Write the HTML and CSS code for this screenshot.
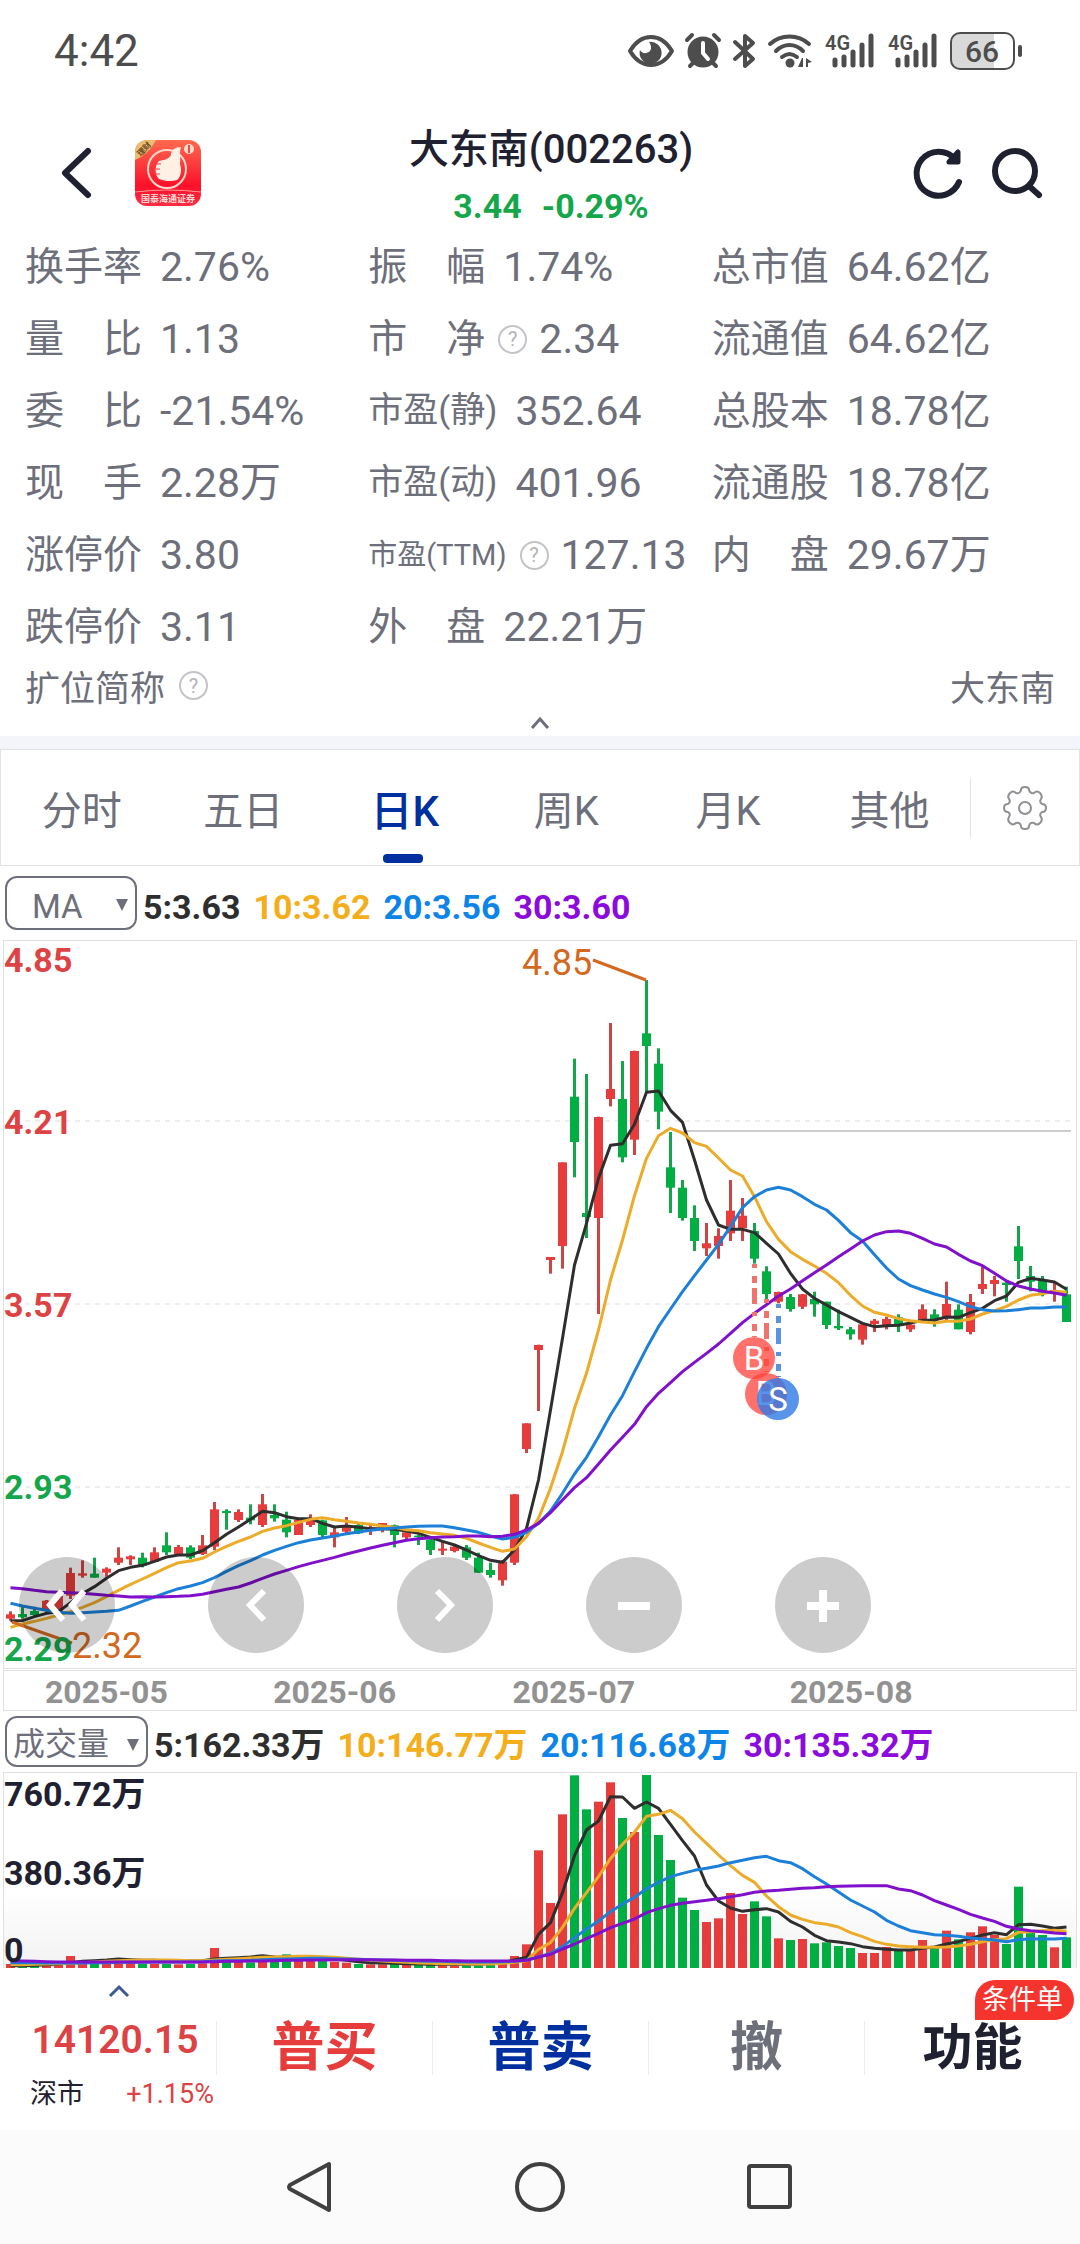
FILE: index.html
```html
<!DOCTYPE html>
<html lang="zh-CN">
<head>
    <meta charset="UTF-8">
    <meta name="viewport" content="width=device-width, initial-scale=1.0">
    <title>大东南(002263)</title>
    <link rel="stylesheet" href="styles.css">
</head>
<body>
    <div class="status-bar">
        <span class="clock">4:42</span>
        <div class="status-icons">
            <svg width="46" height="36" viewBox="0 0 46 36"><path d="M2 18C8 8 15 4 23 4s15 4 21 14c-6 10-13 14-21 14S8 28 2 18z" fill="none" stroke="#4d4d4d" stroke-width="4" stroke-linejoin="round"/><path d="M21 9a11 11 0 1 1-9 8c2 4 7 4 10 1 2-3 1-6-1-9z" fill="#4d4d4d"/></svg>
            <svg width="36" height="36" viewBox="0 0 36 36"><circle cx="18" cy="19" r="15.500" fill="#4d4d4d"/><path d="M18 10v10l5 6" fill="none" stroke="#fff" stroke-width="4" stroke-linecap="round"/><path d="M2 7l5-5M34 7l-5-5M5 33l4-4M31 33l-4-4" stroke="#4d4d4d" stroke-width="4" stroke-linecap="round"/></svg>
            <svg width="24" height="36" viewBox="0 0 24 36"><path d="M3 9l18 17-8 7V3l8 7L3 26" fill="none" stroke="#4d4d4d" stroke-width="4" stroke-linecap="round" stroke-linejoin="round"/></svg>
            <svg width="46" height="36" viewBox="0 0 46 36"><g fill="none" stroke="#4d4d4d" stroke-width="4" stroke-linecap="round"><path d="M3 11c11-10 28-10 39 0M9 18c8-8 19-8 27 0M15 24c5-4 10-4 15 0"/></g><circle cx="23" cy="30" r="4.500" fill="#4d4d4d"/><path d="M36 25v9h-5l4-9M39 34v-9l6 4-4 1v4" fill="#4d4d4d"/></svg>
            <svg width="52" height="36" viewBox="0 0 52 36"><text class="net" x="1" y="17">4G</text><path d="M11 27v5M20 24v8M29 19v13M38 12v20M47 3v29" stroke="#4d4d4d" stroke-width="5" stroke-linecap="round"/></svg>
            <svg width="52" height="36" viewBox="0 0 52 36"><text class="net" x="1" y="17">4G</text><path d="M11 27v5M20 24v8M29 19v13M38 12v20M47 3v29" stroke="#4d4d4d" stroke-width="5" stroke-linecap="round"/></svg>
            <svg width="73" height="38" viewBox="0 0 73 38"><path d="M10 1h34v36H10a8 8 0 0 1-8-8V9a8 8 0 0 1 8-8z" fill="#d9d9d9"/><rect x="1" y="1" width="63" height="36" rx="9" fill="none" stroke="#4d4d4d" stroke-width="2"/><path d="M70 15v8" stroke="#4d4d4d" stroke-width="4" stroke-linecap="round"/><text class="battery-text" x="32" y="30" text-anchor="middle">66</text></svg>
        </div>
    </div>

    <header class="header">
        <div class="header-side">
            <button class="icon-btn" aria-label="返回"><svg width="32" height="54" viewBox="0 0 32 54"><path d="M28 5L5 27l23 22" fill="none" stroke="#1f2130" stroke-width="6" stroke-linecap="round" stroke-linejoin="round"/></svg></button>
            <svg class="logo" width="66" height="66" viewBox="0 0 66 66">
                <defs>
                    <linearGradient id="logo-bg" x1="0" y1="0" x2="0" y2="1"><stop offset="0" stop-color="#ff6a50"/><stop offset=".7" stop-color="#fb1029"/><stop offset="1" stop-color="#ff2f45"/></linearGradient>
                    <clipPath id="logo-clip"><rect width="66" height="66" rx="12"/></clipPath>
                </defs>
                <g clip-path="url(#logo-clip)">
                    <rect width="66" height="66" fill="url(#logo-bg)"/>
                    <path d="M0 0h21Q14 14 0 20z" fill="#e9bd72"/>
                    <path d="M0 52q33-4 66 0" fill="none" stroke="#ff9a94" stroke-width="1"/>
                </g>
                <text class="logo-corner" x="9" y="12" text-anchor="middle" transform="rotate(-45 9 9)">理财</text>
                <circle cx="32" cy="29" r="19" fill="none" stroke="#ffd9cb" stroke-width="2"/>
                <path d="M36 15c0-5 4-8 10-8-2 5 0 11-1 17 2 6 1 13-3 16-6 2-13 1-18-1-5-5-4-14 0-18 4-1 9-1 12-6z" fill="#fff0e6"/>
                <path d="M22 24h4M21 29h4M21 34h4" stroke="#fb3940" stroke-width="1"/>
                <circle cx="54" cy="9" r="5" fill="#ffd9cb"/><path d="M54 5v8" stroke="#f14b3d" stroke-width="2"/>
                <text class="logo-text" x="33" y="62" text-anchor="middle">国泰海通证券</text>
            </svg>
        </div>
        <div class="header-title">
            <h1>大东南(002263)</h1>
            <p class="quote"><span>3.44</span><span>-0.29%</span></p>
        </div>
        <div class="header-side header-actions">
            <button class="icon-btn" aria-label="刷新"><svg width="50" height="52" viewBox="0 0 50 52"><path d="M46 35A22 22 0 1 1 42 12" fill="none" stroke="#1f2130" stroke-width="6" stroke-linecap="round"/><path d="M45 5v10H36z" fill="#1f2130" stroke="#1f2130" stroke-width="5" stroke-linejoin="round"/></svg></button>
            <button class="icon-btn" aria-label="搜索"><svg width="50" height="52" viewBox="0 0 50 52"><circle cx="23" cy="24" r="20" fill="none" stroke="#1f2130" stroke-width="6"/><path d="M37 39l10 9" stroke="#1f2130" stroke-width="6" stroke-linecap="round"/></svg></button>
        </div>
    </header>

    <section class="stats">
        <dl class="stats-grid">
            <div class="stat"><dt>换手率</dt><dd>2.76%</dd></div>
            <div class="stat"><dt>振　幅</dt><dd>1.74%</dd></div>
            <div class="stat"><dt>总市值</dt><dd>64.62亿</dd></div>
            <div class="stat"><dt>量　比</dt><dd>1.13</dd></div>
            <div class="stat has-help"><dt>市　净</dt><dd><button class="help" aria-label="市净说明">?</button>2.34</dd></div>
            <div class="stat"><dt>流通值</dt><dd>64.62亿</dd></div>
            <div class="stat"><dt>委　比</dt><dd>-21.54%</dd></div>
            <div class="stat"><dt class="medium">市盈(静)</dt><dd>352.64</dd></div>
            <div class="stat"><dt>总股本</dt><dd>18.78亿</dd></div>
            <div class="stat"><dt>现　手</dt><dd>2.28万</dd></div>
            <div class="stat"><dt class="medium">市盈(动)</dt><dd>401.96</dd></div>
            <div class="stat"><dt>流通股</dt><dd>18.78亿</dd></div>
            <div class="stat"><dt>涨停价</dt><dd>3.80</dd></div>
            <div class="stat has-help"><dt class="small">市盈(TTM)</dt><dd><button class="help" aria-label="市盈说明">?</button>127.13</dd></div>
            <div class="stat"><dt>内　盘</dt><dd>29.67万</dd></div>
            <div class="stat"><dt>跌停价</dt><dd>3.11</dd></div>
            <div class="stat"><dt>外　盘</dt><dd>22.21万</dd></div>
        </dl>
        <div class="full-name">
            <span class="full-name-label">扩位简称<button class="help" aria-label="扩位简称说明">?</button></span>
            <span>大东南</span>
        </div>
        <button class="collapse" aria-label="收起"><svg width="22" height="14" viewBox="0 0 22 14"><path d="M3 12l8-9 8 9" fill="none" stroke="#6d6f7b" stroke-width="3"/></svg></button>
    </section>

    <nav class="tabs">
        <button class="tab">分时</button>
        <button class="tab">五日</button>
        <button class="tab active">日K</button>
        <button class="tab">周K</button>
        <button class="tab">月K</button>
        <button class="tab">其他</button>
        <button class="settings" aria-label="设置"><svg width="44" height="46" viewBox="0 0 44 46"><path d="M18 5q0-3 4-3t4 3q1 4 5 3 3-3 6 0t1 6q-2 3 1 5 4 0 4 4t-4 4q-3 2-1 5 2 3-1 6t-6 0q-4-1-5 3 0 3-4 3t-4-3q-1-4-5-3-3 3-6 0t-1-6q2-3-1-5-4 0-4-4t4-4q3-2 1-5-2-3 1-6t6 0q4 1 5-3z" fill="none" stroke="#8f8f94" stroke-width="2"/><circle cx="22" cy="23" r="6" fill="none" stroke="#8f8f94" stroke-width="2"/></svg></button>
    </nav>

    <div class="legend">
        <span class="picker">
            <select aria-label="主图指标"><option>MA</option></select>
        </span>
        <span class="ma5">5:3.63</span>
        <span class="ma10">10:3.62</span>
        <span class="ma20">20:3.56</span>
        <span class="ma30">30:3.60</span>
    </div>

    <div class="chart price-chart">
        <svg id="price" viewBox="4 941 1072 727">
            <g class="grid-lines">
                <path d="M25 1121H1072M25 1304H1072M25 1487H1072"/>
            </g>
            <path d="M686 1131H1071" stroke="#ccc" stroke-width="2"/>
            <g id="candles"></g>
            <g id="price-lines"></g>
            <g class="note">
                <path d="M593 960L646 980M12 1622L72 1643"/>
                <text x="522" y="975">4.85</text>
                <text x="72" y="1658">2.32</text>
            </g>
            <g class="axis">
                <text class="up" x="4" y="972">4.85</text>
                <text class="up" x="4" y="1134">4.21</text>
                <text class="up" x="4" y="1317">3.57</text>
                <text class="down" x="4" y="1499">2.93</text>
                <text class="down" x="4" y="1661">2.29</text>
            </g>
            <!-- buy / sell marks -->
            <g stroke-width="5" stroke-dasharray="4 8 7 5 16 8">
                <path d="M754.500 1264V1337M766.500 1299V1372" stroke="#f0736e"/>
                <path d="M778.500 1304V1377" stroke="#5a92e0"/>
            </g>
            <g class="marks">
                <circle cx="766" cy="1394" r="21" fill="#ff4238" opacity=".75"/><text x="766" y="1405">B</text>
                <circle cx="754" cy="1358" r="21" fill="#ff4238" opacity=".75"/><text x="754" y="1370">B</text>
                <circle cx="778" cy="1399" r="21" fill="#3079e6" opacity=".8"/><text x="778" y="1411">S</text>
            </g>
        </svg>
        <div class="chart-controls">
            <button aria-label="最早"><svg width="96" height="96" viewBox="0 0 96 96"><path d="M43 34L31 48l13 15M65 34L53 48l12 15"/></svg></button>
            <button aria-label="向左"><svg width="96" height="96" viewBox="0 0 96 96"><path d="M56 34L42 48l14 15"/></svg></button>
            <button aria-label="向右"><svg width="96" height="96" viewBox="0 0 96 96"><path d="M40 34l14 14-14 15"/></svg></button>
            <button aria-label="缩小"><svg width="96" height="96" viewBox="0 0 96 96"><path class="bold" d="M32 49h32"/></svg></button>
            <button aria-label="放大"><svg width="96" height="96" viewBox="0 0 96 96"><path class="bold" d="M32 49h32M48 33v32"/></svg></button>
        </div>
    </div>
    <div class="dates">
        <span>2025-05</span><span>2025-06</span><span>2025-07</span><span>2025-08</span>
    </div>

    <div class="legend legend-volume">
        <span class="picker picker-wide">
            <select aria-label="副图指标"><option>成交量</option></select>
        </span>
        <span class="ma5">5:162.33万</span>
        <span class="ma10">10:146.77万</span>
        <span class="ma20">20:116.68万</span>
        <span class="ma30">30:135.32万</span>
    </div>

    <div class="chart volume-chart">
        <svg id="volume" viewBox="4 1773 1072 195">
            <g id="bars"></g>
            <g id="volume-lines"></g>
            <g class="axis">
                <text x="4" y="1806">760.72万</text>
                <text x="4" y="1885">380.36万</text>
                <text x="4" y="1962">0</text>
            </g>
        </svg>
    </div>

    <footer class="trade-bar">
        <a class="index" href="#">
            <svg width="22" height="14" viewBox="0 0 22 14"><path d="M2 12l9-9 9 9" fill="none" stroke="#3c5a94" stroke-width="3"/></svg>
            <strong>14120.15</strong>
            <span class="index-row"><span>深市</span><span class="index-change">+1.15%</span></span>
        </a>
        <button class="trade buy">普买</button>
        <button class="trade sell">普卖</button>
        <button class="trade cancel">撤</button>
        <button class="trade more">功能<span class="badge">条件单</span></button>
    </footer>

    <div class="system-nav">
        <button aria-label="后退"><svg width="48" height="52" viewBox="0 0 48 52"><path d="M43 3v46L4 28q-2-2 0-4z" fill="none" stroke="#404040" stroke-width="4" stroke-linejoin="round"/></svg></button>
        <button aria-label="主页"><svg width="52" height="52" viewBox="0 0 52 52"><circle cx="26" cy="26" r="23" fill="none" stroke="#404040" stroke-width="4"/></svg></button>
        <button aria-label="最近任务"><svg width="48" height="52" viewBox="0 0 48 52"><rect x="3" y="5" width="41" height="41" rx="2" fill="none" stroke="#404040" stroke-width="4"/></svg></button>
    </div>

    <script src="chart.js"></script>
</body>
</html>
```
FILE: styles.css
```css
* {
    box-sizing: border-box;
}

body {
    margin: 0;
    background: #fff;
    color: #6d6f7b;
    font-family: Roboto, "Noto Sans CJK SC", sans-serif;
}

button {
    padding: 0;
    border: none;
    background: none;
    font-family: inherit;
    color: inherit;
}

svg {
    display: block;
    overflow: visible;
}

/* status bar */
.status-bar {
    display: flex;
    justify-content: space-between;
    align-items: center;
    height: 102px;
    padding: 0 57px 0 54px;
}

.clock {
    font-size: 44px;
    color: #4d4d4d;
}

.status-icons {
    display: flex;
    align-items: center;
    gap: 11px;
}

.net {
    font-size: 20px;
    font-weight: 600;
    fill: #4d4d4d;
}

.battery-text {
    font-size: 30px;
    font-weight: 500;
    fill: #4d4d4d;
}

/* header */
.header {
    display: grid;
    grid-template-columns: 1fr auto 1fr;
    height: 126px;
    padding: 20px 38px 0 60px;
}

.header-side {
    display: flex;
    align-items: center;
    height: 102px;
    gap: 43px;
}

.header-actions {
    justify-content: flex-end;
    gap: 29px;
}

.header-title {
    text-align: center;
}

.header-title h1 {
    margin: 0;
    font-size: 40px;
    font-weight: 500;
    line-height: 56px;
    color: #1f2130;
}

.quote {
    display: flex;
    justify-content: center;
    gap: 20px;
    margin: 0;
    font-size: 34px;
    font-weight: 700;
    line-height: 56px;
    color: #14a64a;
}

.logo-text {
    font-size: 9px;
    font-weight: 700;
    fill: #ffdad6;
}

.logo-corner {
    font-size: 8px;
    font-weight: 700;
    fill: #6e4a1c;
}

/* stats */
.stats {
    padding: 3px 25px 0;
    border-bottom: 13px solid #f4f5fa;
}

.stats-grid {
    display: grid;
    grid-template-columns: repeat(3, 1fr);
    grid-auto-rows: 72px;
    margin: 0;
}

.stat {
    display: flex;
    align-items: center;
    gap: 18px;
    line-height: 68px;
    white-space: nowrap;
}

.has-help {
    gap: 13px;
}

.stat dt {
    font-size: 39px;
}

.stat dt.medium {
    font-size: 35px;
}

.stat dt.small {
    font-size: 29px;
}

.stat dd {
    display: flex;
    align-items: center;
    gap: 12px;
    margin: 0;
    font-size: 41px;
}

.help {
    width: 29px;
    height: 29px;
    border: 2px solid #c4c4c8;
    border-radius: 50%;
    font-size: 20px;
    line-height: 24px;
    color: #b4b4b8;
}

.full-name {
    display: flex;
    justify-content: space-between;
    align-items: center;
    height: 45px;
    font-size: 35px;
}

.full-name-label {
    display: flex;
    align-items: center;
    gap: 14px;
}

.collapse {
    display: flex;
    justify-content: center;
    width: 100%;
    height: 28px;
    padding-top: 8px;
}

/* period tabs */
.tabs {
    display: flex;
    height: 117px;
    border: 1px solid #e2e2e6;
}

.tab {
    position: relative;
    flex: 162;
    font-size: 40px;
}

.tab.active {
    font-size: 42px;
    font-weight: 500;
    color: #0030a0;
}

.tab.active::after {
    content: "";
    position: absolute;
    left: 50%;
    bottom: 2px;
    width: 40px;
    height: 9px;
    margin-left: -22px;
    border-radius: 4px;
    background: #0030a0;
}

.settings {
    display: flex;
    flex: 108;
    justify-content: center;
    align-items: center;
    align-self: center;
    height: 60px;
    border-left: 1px solid #e2e2e6;
}

/* legends */
.legend {
    display: flex;
    align-items: center;
    gap: 13px;
    height: 74px;
    padding-left: 5px;
    font-size: 34px;
    font-weight: 700;
    line-height: 40px;
    white-space: nowrap;
}

.legend > span:not(.picker) {
    padding-top: 7px;
}

.legend-volume {
    height: 61px;
}

.picker {
    position: relative;
    width: 132px;
    height: 54px;
    margin-right: -7px;
}

.picker-wide {
    width: 143px;
    height: 51px;
}

.picker select {
    appearance: none;
    width: 100%;
    height: 100%;
    padding: 6px 0 0 25px;
    border: 2px solid #6d6f7b;
    border-radius: 12px;
    background: none;
    font-family: inherit;
    font-size: 33px;
    color: #6d6f7b;
}

.picker-wide select {
    padding: 4px 0 0 6px;
    font-size: 32px;
}

.picker::after {
    content: "";
    position: absolute;
    right: 9px;
    top: 23px;
    border: 6px solid transparent;
    border-top: 12px solid #6d6f7b;
    border-bottom: none;
}

.ma5 { color: #2e2e2e; }
.ma10 { color: #f5ae1b; }
.ma20 { color: #0d85e8; }
.ma30 { color: #8c0bdc; }

/* charts */
.chart {
    position: relative;
    margin: 0 3px;
    border: 1px solid #e0e0e0;
}

.chart > svg {
    width: 100%;
    height: auto;
}

.price-chart {
    margin-bottom: 1px;
}

.volume-chart {
    border-bottom: none;
    background: linear-gradient(#fff 60%, #f2f2f2);
}

.grid-lines path {
    stroke: #eee;
    stroke-width: 2;
    stroke-dasharray: 5 5;
}

.axis text {
    font-size: 34px;
    font-weight: 700;
    fill: #1f2130;
}

.axis .up { fill: #dd4244; }
.axis .down { fill: #14a64a; }

.note text {
    font-size: 36px;
    fill: #d2691e;
}

.note path {
    stroke: #d2691e;
    stroke-width: 3;
}

.marks text {
    font-size: 33px;
    fill: #fff;
    text-anchor: middle;
}

.line {
    fill: none;
    stroke-width: 3;
    stroke-linejoin: round;
}

.line.ma5 { stroke: #2e2e2e; }
.line.ma10 { stroke: #ecab28; }
.line.ma20 { stroke: #1c80d8; }
.line.ma30 { stroke: #8010cc; }

.rise { fill: #e63c3c; }
.fall { fill: #00ae42; }
.wick.rise { fill: #cc4646; }
.wick.fall { fill: #16a34a; }

.chart-controls {
    position: absolute;
    left: 15px;
    bottom: 15px;
    display: flex;
    gap: 93px;
}

.chart-controls button {
    border-radius: 50%;
    background: rgba(0, 0, 0, 0.2);
}

.chart-controls path {
    fill: none;
    stroke: #fff;
    stroke-width: 6;
}

.chart-controls .bold {
    stroke-width: 8;
}

.dates {
    display: grid;
    grid-template-columns: 228fr 239fr 277fr 286fr;
    height: 41px;
    margin: 0 3px;
    padding-left: 41px;
    border: 1px solid #e0e0e0;
    font-size: 32px;
    font-weight: 700;
    line-height: 42px;
    color: #929292;
}

/* trade bar */
.trade-bar {
    display: grid;
    grid-template-columns: repeat(5, 1fr);
    height: 162px;
}

.index {
    display: flex;
    flex-direction: column;
    align-items: center;
    padding-top: 16px;
    text-decoration: none;
    color: #1f2130;
}

.index svg {
    margin-left: 22px;
}

.index strong {
    margin: 14px 0 8px 14px;
    font-size: 39px;
    font-weight: 600;
    line-height: 56px;
    color: #dd4244;
}

.index-row {
    display: flex;
    justify-content: space-between;
    width: 100%;
    padding: 2px 2px 0 30px;
    font-size: 27px;
    line-height: 32px;
}

.index-change {
    color: #dd4244;
}

.trade {
    position: relative;
    align-self: start;
    height: 54px;
    margin-top: 53px;
    border-left: 1px solid #ececf0;
    font-size: 53px;
    font-weight: 700;
    line-height: 40px;
}

.buy { color: #e63c3c; }
.sell { color: #0030a0; }

.more {
    font-size: 50px;
    color: #1f2130;
}

.badge {
    position: absolute;
    right: 6px;
    top: -41px;
    padding: 0 11px 0 7px;
    border-radius: 20px 20px 20px 0;
    background: #f5342e;
    font-size: 27px;
    font-weight: 400;
    line-height: 40px;
    color: #fff;
}

/* system navigation */
.system-nav {
    display: flex;
    justify-content: center;
    align-items: center;
    gap: 180px;
    height: 114px;
    background: #fbfbfb;
}
```
FILE: chart.js
```js
const STEP = 12;
const FIRST_X = 10.5;
const BODY = 9;
const NS = 'http://www.w3.org/2000/svg';

// values are kept in thirds of a chart unit, counted from the base of each block
const block = (base, values) => values.map(v => base + v / 3);
const candleBlock = (base, rows) => rows.map(([dir, ...v]) => [dir, ...block(base, v)]);

// direction, high, low, body top, body bottom
const candles = [
    ...candleBlock(1450, [
        ['r', 484, 512, 493, 506], ['f', 466, 506, 492, 502], ['f', 470, 500, 483, 495],
        ['r', 450, 490, 452, 480], ['r', 438, 485, 438, 482], ['r', 353, 447, 369, 437],
        ['r', 331, 383, 370, 377], ['f', 323, 383, 371, 383], ['r', 352, 380, 356, 368],
        ['r', 292, 345, 323, 338], ['r', 316, 345, 319, 328], ['f', 308, 352, 323, 346],
        ['r', 292, 336, 307, 336], ['f', 247, 315, 286, 307], ['r', 285, 315, 291, 312],
        ['f', 286, 328, 292, 323], ['r', 255, 315, 286, 312], ['r', 156, 300, 178, 290],
        ['f', 178, 239, 183, 189], ['r', 178, 216, 186, 210], ['f', 163, 223, 203, 211],
        ['r', 132, 231, 163, 225], ['f', 163, 215, 195, 205], ['f', 185, 262, 209, 247],
        ['r', 205, 255, 209, 255], ['r', 193, 231, 209, 225], ['f', 209, 262, 211, 255],
        ['r', 232, 292, 247, 262], ['r', 201, 250, 225, 245], ['f', 222, 252, 225, 250],
        ['r', 225, 255, 232, 240], ['r', 219, 247, 219, 226], ['f', 224, 292, 226, 255],
        ['r', 240, 270, 247, 262], ['f', 255, 285, 257, 261], ['f', 262, 315, 269, 300],
        ['r', 275, 315, 296, 302], ['r', 285, 307, 290, 303], ['f', 285, 330, 292, 323],
        ['f', 308, 368, 323, 368], ['f', 338, 383, 360, 375], ['r', 330, 407, 335, 391],
        ['r', 132, 345, 133, 338]
    ]),
    ...candleBlock(930, [
        ['r', 1480, 1569, 1480, 1557], ['r', 1244, 1443, 1245, 1260], ['r', 981, 1031, 981, 990],
        ['r', 697, 1016, 697, 948], ['f', 386, 742, 500, 636], ['f', 432, 924, 849, 861],
        ['r', 560, 1152, 561, 864], ['r', 279, 529, 477, 507], ['f', 393, 697, 507, 682],
        ['r', 362, 675, 363, 629], ['f', 150, 487, 310, 348], ['f', 355, 598, 401, 545],
        ['f', 606, 849, 712, 773], ['f', 750, 872, 773, 864], ['f', 826, 963, 864, 933],
        ['r', 879, 978, 940, 955], ['r', 895, 986, 918, 948], ['r', 750, 933, 842, 910],
        ['r', 804, 933, 857, 895], ['f', 879, 1001, 903, 986], ['f', 1009, 1107, 1024, 1092],
        ['r', 1085, 1120, 1086, 1115], ['f', 1092, 1145, 1101, 1137], ['r', 1092, 1137, 1093, 1130],
        ['f', 1085, 1160, 1107, 1123], ['f', 1115, 1197, 1115, 1185]
    ]),
    ...candleBlock(1130, [
        ['f', 539, 600, 588, 595], ['f', 591, 629, 598, 613], ['r', 583, 644, 583, 629],
        ['r', 567, 606, 572, 582], ['r', 560, 598, 567, 585], ['f', 553, 606, 562, 585],
        ['r', 583, 606, 584, 598], ['r', 523, 572, 538, 570], ['f', 538, 590, 553, 570],
        ['r', 455, 570, 522, 562], ['f', 523, 598, 539, 598], ['r', 492, 613, 516, 606],
        ['r', 405, 492, 462, 477], ['r', 438, 499, 450, 462], ['f', 455, 515, 458, 465],
        ['f', 288, 447, 349, 393], ['f', 408, 484, 438, 455], ['f', 438, 499, 450, 488],
        ['r', 455, 515, 480, 487], ['f', 470, 576, 493, 576]
    ])
];

const priceLines = {
    ma5: [
        ...block(1450, [512, 512, 500, 490, 485, 458, 431, 410, 385, 362, 352, 346, 334, 321, 315, 315, 302, 278, 253, 231, 208, 184, 188, 200, 206, 206, 220, 231, 228, 232, 236, 236, 238, 243, 250, 262, 274, 285, 300, 317, 331, 337, 300, 235, 90]),
        ...block(930, [1440, 1225, 1005, 880, 745, 646, 641, 583, 487, 483, 541, 577, 690, 810, 885, 898, 898, 908, 940, 972, 1030, 1077, 1105]),
        ...block(1130, [525, 545, 562, 580, 590, 587, 586, 579, 571, 570, 561, 562, 548, 535, 512, 498, 457, 445, 450, 456, 478])
    ],
    ma10: [
        ...block(1450, [532, 522, 514, 505, 495, 485, 472, 458, 440, 421, 403, 387, 370, 353, 338, 333, 325, 306, 289, 274, 261, 244, 234, 227, 217, 208, 203, 209, 214, 219, 223, 228, 232, 239, 242, 248, 252, 256, 265, 279, 292, 304, 297, 260, 205, 115, 5]),
        ...block(930, [1435, 1330, 1200, 1050, 930, 797, 685, 617, 595, 609, 638, 649, 684, 720, 738, 800, 875, 928, 965, 988, 1008]),
        ...block(1130, [430, 458, 496, 528, 547, 555, 566, 572, 576, 579, 574, 574, 567, 552, 542, 529, 510, 496, 491, 484, 487])
    ],
    ma20: [
        ...block(1450, [460, 468, 475, 481, 487, 490, 488, 486, 484, 481, 468, 454, 441, 428, 416, 408, 398, 383, 364, 347, 332, 315, 301, 289, 278, 270, 264, 258, 251, 246, 241, 237, 234, 231, 229, 228, 228, 233, 240, 247, 258, 267, 262, 247, 220, 183, 130, 72, 22, -40]),
        ...block(930, [1455, 1397, 1325, 1255, 1190, 1137, 1085, 1037, 990, 943, 890, 833, 800, 780, 772, 780, 800, 823]),
        ...block(1130, [240, 271, 308, 333, 374, 414, 447, 467, 480, 492, 502, 515, 530, 539, 543, 542, 539, 534, 534, 531, 531])
    ],
    ma30: [
        ...block(1450, [413, 416, 421, 425, 427, 428, 430, 433, 436, 438, 441, 440, 441, 440, 439, 437, 433, 425, 418, 411, 399, 385, 372, 361, 350, 340, 331, 322, 312, 303, 294, 286, 278, 271, 266, 263, 261, 260, 258, 258, 260, 259, 253, 240, 220, 188, 150, 113, 83, 42, 0, -38]),
        ...block(930, [1483, 1430, 1390, 1358, 1325, 1297, 1270, 1242, 1210, 1178, 1150, 1124, 1098, 1077, 1052, 1028]),
        ...block(1130, [405, 380, 357, 333, 315, 305, 303, 310, 325, 342, 351, 373, 393, 407, 430, 453, 468, 477, 484, 489, 496])
    ]
};

const volumes = block(1710, [
    762, 765, 766, 764, 765, 738, 762, 761, 760, 744, 755, 762, 762, 762, 763, 762, 760, 714, 750, 752,
    757, 745, 752, 733, 735, 745, 752, 755, 758, 762, 763, 763, 762, 764, 765, 765, 764, 766, 766, 766,
    765, 762, 738, 703, 421, 579, 313, 196, 298, 275, 217, 324, 366, 195, 375, 450, 563, 600, 636, 625,
    549, 612, 574, 619, 685, 690, 687, 700, 697, 708, 714, 729, 729, 711, 722, 722, 690, 712, 662, 688,
    667, 649, 675, 702, 530, 668, 675, 712, 682
]);

const volumeLines = {
    ma5: block(1710, [767, 767, 766, 764, 762, 758, 754, 752, 750, 747, 749, 751, 751, 752, 753, 753, 752, 747, 745, 743, 741, 737, 741, 742, 741, 743, 745, 748, 751, 755, 758, 759, 760, 761, 762, 763, 763, 763, 763, 762, 761, 758, 750, 742, 673, 638, 548, 437, 360, 333, 260, 261, 295, 276, 295, 343, 392, 438, 525, 573, 594, 604, 599, 596, 606, 634, 651, 676, 692, 696, 701, 710, 715, 718, 720, 720, 715, 711, 702, 695, 685, 675, 668, 674, 644, 643, 648, 655, 651]),
    ma10: block(1710, [764, 764, 763, 762, 761, 760, 758, 756, 754, 752, 751, 750, 750, 750, 751, 752, 752, 750, 748, 746, 744, 742, 741, 740, 739, 739, 740, 742, 745, 748, 751, 753, 755, 757, 759, 760, 761, 761, 762, 762, 762, 760, 757, 752, 718, 698, 652, 595, 548, 500, 446, 403, 366, 319, 313, 301, 326, 366, 400, 435, 467, 496, 517, 558, 590, 615, 628, 638, 643, 651, 668, 680, 694, 703, 708, 710, 712, 712, 711, 708, 703, 695, 689, 686, 667, 665, 662, 661, 664]),
    ma20: block(1710, [758, 758, 758, 759, 759, 759, 759, 758, 758, 757, 757, 757, 756, 756, 756, 756, 755, 753, 752, 752, 751, 749, 748, 747, 746, 745, 745, 746, 747, 748, 749, 750, 751, 752, 753, 754, 754, 755, 756, 756, 756, 755, 754, 750, 741, 730, 710, 683, 657, 633, 605, 582, 562, 536, 517, 500, 490, 481, 475, 468, 458, 451, 443, 439, 452, 458, 476, 500, 522, 546, 570, 588, 606, 631, 648, 662, 668, 674, 676, 679, 684, 687, 690, 695, 689, 686, 687, 687, 685]),
    ma30: block(1710, [753, 753, 754, 755, 756, 756, 756, 756, 756, 756, 756, 756, 756, 756, 756, 756, 756, 755, 754, 754, 753, 753, 752, 751, 751, 750, 750, 749, 749, 749, 749, 750, 750, 751, 751, 751, 752, 752, 753, 753, 753, 753, 753, 751, 741, 733, 717, 702, 686, 670, 653, 640, 627, 608, 596, 586, 580, 575, 571, 566, 560, 554, 547, 543, 541, 538, 535, 533, 530, 529, 528, 527, 527, 527, 537, 542, 555, 572, 585, 598, 613, 624, 634, 649, 657, 662, 665, 669, 671])
};

function centerX(i) {
    return FIRST_X + i * STEP;
}

function addRect(parent, x, y, width, height, className) {
    const rect = document.createElementNS(NS, 'rect');
    rect.setAttribute('x', x);
    rect.setAttribute('y', y);
    rect.setAttribute('width', width);
    rect.setAttribute('height', height);
    rect.setAttribute('class', className);
    parent.appendChild(rect);
}

function drawLines(parent, lines) {
    Object.keys(lines).forEach(name => {
        const line = document.createElementNS(NS, 'polyline');
        line.setAttribute('points', lines[name].map((y, i) => `${centerX(i)},${y}`).join(' '));
        line.setAttribute('class', `line ${name}`);
        parent.appendChild(line);
    });
}

const candleGroup = document.getElementById('candles');
const barGroup = document.getElementById('bars');
const bottom = 1968;

candles.forEach(([dir, high, low, top, base], i) => {
    const color = dir === 'r' ? 'rise' : 'fall';
    const x = centerX(i);
    addRect(candleGroup, x - 1.5, high, 3, low - high, `wick ${color}`);
    addRect(candleGroup, x - BODY / 2, top, BODY, base - top, color);
    addRect(barGroup, x - BODY / 2, volumes[i], BODY, bottom - volumes[i], color);
});

drawLines(document.getElementById('price-lines'), priceLines);
drawLines(document.getElementById('volume-lines'), volumeLines);
```
